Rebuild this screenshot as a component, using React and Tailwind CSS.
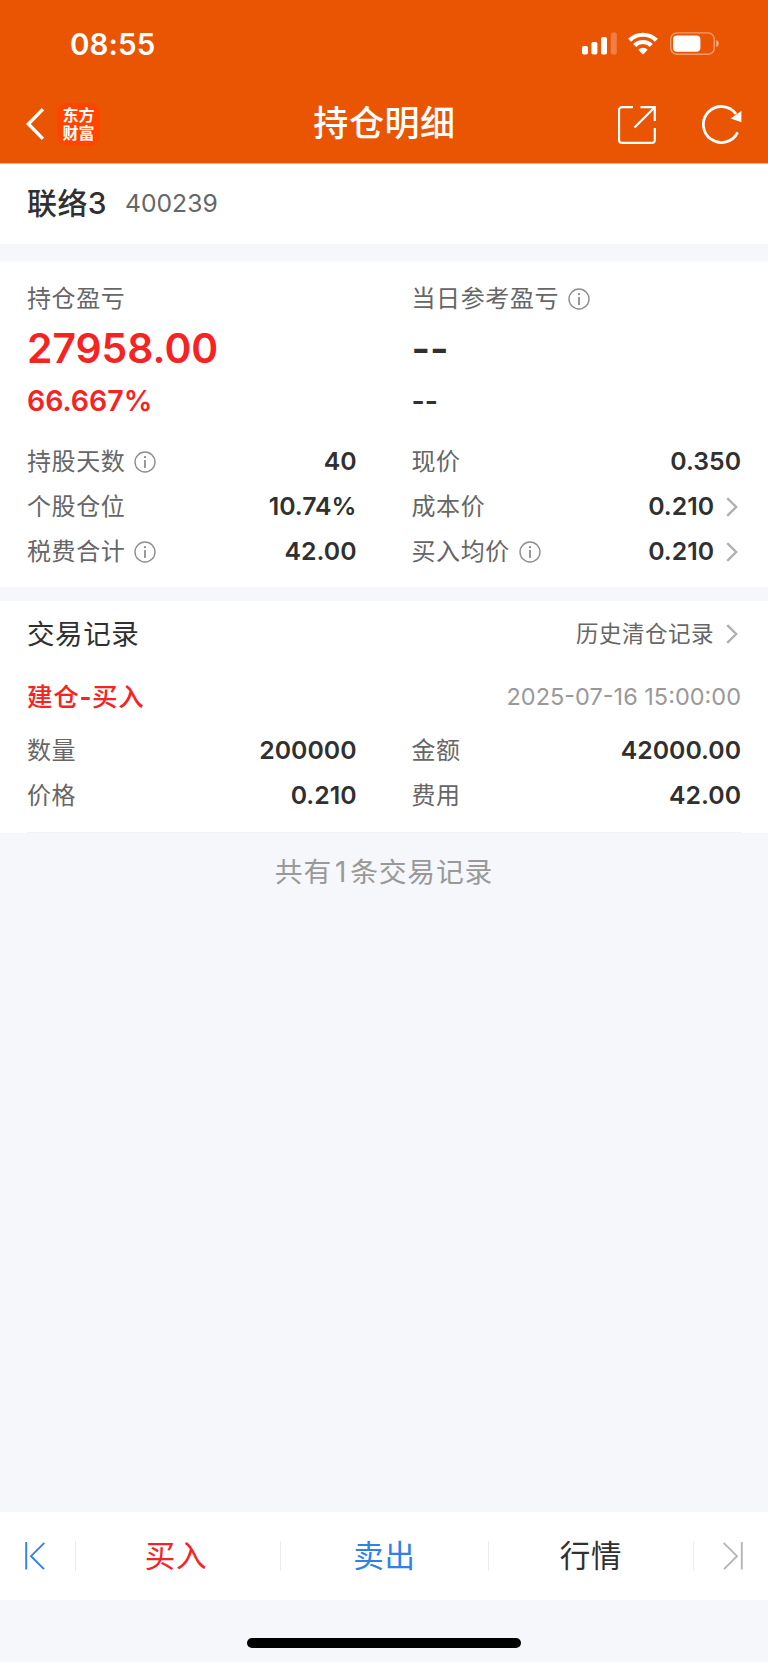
import clsx from "clsx";

const InfoIcon = () => (
  <svg className="ml-[9px] h-[22px] w-[22px] shrink-0" viewBox="0 0 22 22" fill="none">
    <circle cx="11" cy="11" r="10" stroke="#8e8e8e" strokeWidth="1.4" />
    <circle cx="11" cy="6.1" r="1.2" fill="#8e8e8e" />
    <path d="M11 9v8" stroke="#8e8e8e" strokeWidth="1.8" />
  </svg>
);

const ArrowIcon = () => (
  <svg className="ml-3 mr-[3px] h-[20px] w-[12px] shrink-0" viewBox="0 0 12 20" fill="none">
    <path d="M1.2 1.2 10.2 10l-9 8.8" stroke="#b0b0b0" strokeWidth="2.4" />
  </svg>
);

const StatusBar = () => (
  <div className="flex h-[87px] items-center justify-between pl-[70px] pr-[48px]">
    <span className="pt-[2px] text-[29.5px] font-semibold leading-none tracking-[0.1px]">08:55</span>
    <div className="flex items-center">
      <svg className="h-[23px] w-[36px]" viewBox="0 0 36 23" fill="#fff">
        <rect x="0" y="14" width="6" height="8.6" rx="1.8" />
        <rect x="9.4" y="10" width="6" height="12.6" rx="1.8" />
        <rect x="19" y="5" width="6" height="17.6" rx="1.8" />
        <rect x="28.8" y="0.4" width="6" height="22.2" rx="1.8" opacity=".25" />
      </svg>
      <svg className="ml-[10px] h-[23px] w-[30px]" viewBox="0 0 30 23" fill="none">
        <path d="M1.6 8.3a19 19 0 0 1 26.8 0" stroke="#fff" strokeWidth="4.2" />
        <path d="M6.7 13.4a11.8 11.8 0 0 1 16.6 0" stroke="#fff" strokeWidth="4.2" />
        <path d="M10.3 17.7a6.8 6.8 0 0 1 9.4 0L15 22.6z" fill="#fff" />
      </svg>
      <svg className="ml-[12px] h-[23px] w-[50px]" viewBox="0 0 50 23" fill="none">
        <rect x=".7" y=".9" width="43.6" height="21.4" rx="6.2" stroke="#fff" strokeOpacity=".42" strokeWidth="1.4" />
        <rect x="3" y="3.4" width="27.4" height="16.4" rx="4" fill="#fff" />
        <path d="M46.2 8v7.2c1.5-.6 2.6-1.9 2.6-3.6s-1.1-3-2.6-3.6z" fill="#fff" fillOpacity=".5" />
      </svg>
    </div>
  </div>
);

const NavBar = () => (
  <div className="grid h-[74px] grid-cols-3 items-center pl-[26px] pr-[26px]">
    <div className="flex items-center">
      <svg className="h-[32px] w-[18px]" viewBox="0 0 18 32" fill="none">
        <path d="M17 1.2 2.4 16 17 30.8" stroke="#fff" strokeWidth="3.4" />
      </svg>
      <div className="ml-[13px] flex h-[43px] w-[43px] flex-col items-center justify-center rounded-[10px] bg-[#ff4400] pb-px text-[16px] font-bold leading-[18px]">
        <span>东方</span>
        <span>财富</span>
      </div>
    </div>
    <h1 className="pb-[2px] pl-px text-center text-[35px] font-medium leading-none tracking-[0.6px] whitespace-nowrap">持仓明细</h1>
    <div className="flex items-center justify-end pt-px">
      <svg className="h-[38px] w-[38px]" viewBox="0 0 38 38" fill="none" stroke="#fff" strokeWidth="2.2">
        <path d="M15 1.1H4a3 3 0 0 0-3 3v29.8a3 3 0 0 0 3 3h29.8a3 3 0 0 0 3-3V22" />
        <path d="M22.5 1.2H36.8V15M36.5 1.5 16.5 21.5" />
      </svg>
      <svg className="ml-[46px] h-[40px] w-[40px]" viewBox="0 0 40 40" fill="none">
        <path d="M35.6 27.3A18 18 0 1 1 34 9" stroke="#fff" strokeWidth="2.8" />
        <path d="M39.4 6v11.2L28.6 13.4z" fill="#fff" />
      </svg>
    </div>
  </div>
);

const Row = ({label, value, info, arrow}) => (
  <div className="flex h-[45px] items-center justify-between">
    <span className="flex items-center pt-px text-[24px] tracking-[0.6px] text-[#666]">
      {label}
      {info && <InfoIcon />}
    </span>
    <span className="flex items-center text-[24.8px] font-semibold text-[#303030]">
      {value}
      {arrow && <ArrowIcon />}
    </span>
  </div>
);

const holdings = [
  {label: "持股天数", value: "40", info: true},
  {label: "现价", value: "0.350"},
  {label: "个股仓位", value: "10.74%"},
  {label: "成本价", value: "0.210", arrow: true},
  {label: "税费合计", value: "42.00", info: true},
  {label: "买入均价", value: "0.210", info: true, arrow: true},
];

const trade = [
  {label: "数量", value: "200000"},
  {label: "金额", value: "42000.00"},
  {label: "价格", value: "0.210"},
  {label: "费用", value: "42.00"},
];

const tabs = [
  {label: "买入", color: "text-[#f62323]", cell: "w-[205px] pr-1"},
  {label: "卖出", color: "text-[#2f80e8]", cell: "w-[208px]"},
  {label: "行情", color: "text-[#303030]", cell: "w-[205px]"},
];

const TabBar = () => (
  <nav className="flex h-[88px] items-center bg-white">
    <div className="flex w-[75px] pl-[25px]">
      <svg className="h-[28px] w-[20px]" viewBox="0 0 20 28" fill="none" stroke="#2f80e8" strokeWidth="1.9">
        <path d="M1.2 0v27.5M19.4.8 6 14.2l13 13" />
      </svg>
    </div>
    {tabs.map((tab) => (
      <div key={tab.label} className={clsx("flex h-[30px] items-center justify-center border-l border-[#ececec]", tab.cell)}>
        <span className={clsx("text-[30.5px] tracking-[0.8px]", tab.color)}>{tab.label}</span>
      </div>
    ))}
    <div className="flex h-[30px] w-[75px] items-center justify-end border-l border-[#ececec] pr-[25px]">
      <svg className="h-[28px] w-[20px]" viewBox="0 0 20 28" fill="none" stroke="#b5b5b5" strokeWidth="1.9">
        <path d="M18.8 0v27.5M.6.8 14 14.2l-13 13" />
      </svg>
    </div>
  </nav>
);

const App = () => {
  return (
    <div className="flex h-[1662px] w-[768px] flex-col bg-[#f6f7fa] font-['Inter','Noto_Sans_CJK_SC',sans-serif] text-[#303030]">
      <header className="h-[164px] shrink-0 border-b border-[#f5b08a] bg-[#ea5504] text-white">
        <StatusBar />
        <NavBar />
      </header>

      <section className="flex h-[80px] items-center bg-white px-[27px]">
        <span className="pb-px text-[30px] font-medium tracking-[0.4px]">联络3</span>
        <span className="ml-[18px] text-[24.7px] text-[#666]">400239</span>
      </section>

      <section className="mt-[18px] h-[325px] bg-white px-[27px] pt-5">
        <div className="grid grid-cols-2 gap-x-[55px]">
          <div>
            <div className="flex h-8 items-center pt-[2px] text-[24px] tracking-[0.6px] text-[#666]">持仓盈亏</div>
            <div className="flex h-[68px] items-center pt-px text-[40.8px] font-semibold text-[#f62323]">27958.00</div>
            <div className="flex h-[37px] items-center pt-px text-[28.5px] font-semibold text-[#f62323]">66.667%</div>
          </div>
          <div>
            <div className="flex h-8 items-center pt-[2px] text-[24px] tracking-[0.6px] text-[#666]">
              当日参考盈亏
              <InfoIcon />
            </div>
            <div className="flex h-[68px] items-center pt-px text-[40px] font-semibold">--</div>
            <div className="flex h-[37px] items-center pt-px text-[28.5px] font-semibold">--</div>
          </div>
        </div>
        <div className="mt-5 grid grid-cols-2 gap-x-[55px]">
          {holdings.map((item) => (
            <Row key={item.label} {...item} />
          ))}
        </div>
      </section>

      <section className="mt-[14px] h-[232px] bg-white px-[27px]">
        <div className="flex h-[66px] items-center justify-between">
          <h2 className="pt-px text-[27.5px] tracking-[0.6px]">交易记录</h2>
          <span className="flex items-center text-[22.5px] tracking-[0.5px] text-[#666]">
            历史清仓记录
            <ArrowIcon />
          </span>
        </div>
        <div className="flex h-[60px] items-center justify-between">
          <span className="text-[25.5px] font-medium tracking-[0.7px] text-[#f62323]">
            建仓<span className="font-bold">-</span>买入
          </span>
          <span className="text-[23.5px] text-[#999]">2025-07-16 15:00:00</span>
        </div>
        <div className="mt-px grid grid-cols-2 gap-x-[55px]">
          {trade.map((item) => (
            <Row key={item.label} {...item} />
          ))}
        </div>
        <div className="mt-[14px] h-px bg-[#f1f2f5]" />
      </section>

      <p className="flex h-[79px] items-center justify-center pt-px text-[27.8px] tracking-[0.8px] text-[#999]">
        共有<span className="mx-[3px]">1</span>条交易记录
      </p>

      <div className="flex-1" />
      <TabBar />
      <div className="flex h-[62px] justify-center pt-[38px]">
        <div className="h-[10px] w-[274px] rounded-full bg-black" />
      </div>
    </div>
  );
};

export default App;
